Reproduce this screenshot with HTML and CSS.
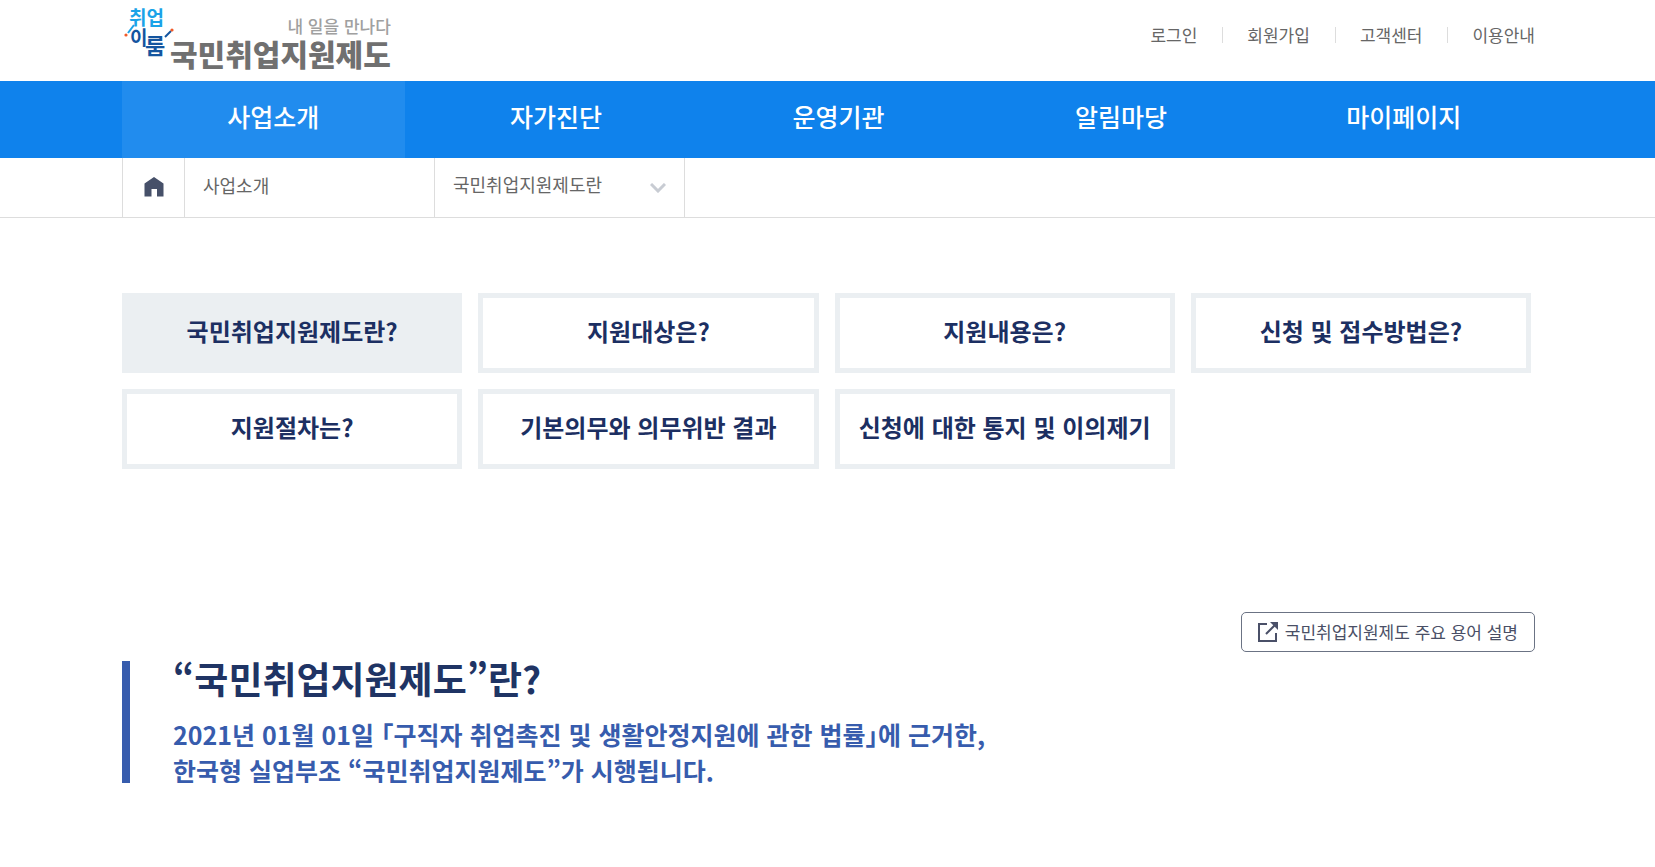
FILE: index.html
```html
<!DOCTYPE html>
<html lang="ko">
<head>
  <meta charset="UTF-8">
  <meta name="viewport" content="width=device-width, initial-scale=1.0">
  <title>국민취업지원제도</title>
  <link rel="stylesheet" href="styles.css">
</head>
<body>
  <!-- Header -->
  <header class="header">
    <a class="logo" href="#">
      <svg class="logo-mark" viewBox="0 0 52 60" aria-hidden="true">
        <text class="mark-top" x="7" y="25">취업</text>
        <text class="mark-bottom" x="8" y="45">이</text>
        <text class="mark-bottom mark-large" x="23" y="54">룸</text>
        <path d="M6 33l6-8" stroke="#1ba3e8" stroke-width="2"/>
        <path d="M43 37l6-6" stroke="#14559f" stroke-width="2"/>
        <circle cx="4" cy="35" r="1.6" fill="#f15a29"/>
        <circle cx="50" cy="30" r="1.6" fill="#f15a29"/>
      </svg>
      <span class="logo-text">
        <span class="logo-slogan">내 일을 만나다</span>
        <strong class="logo-name">국민취업지원제도</strong>
      </span>
    </a>
    <ul class="util">
      <li><a href="#">로그인</a></li>
      <li><a href="#">회원가입</a></li>
      <li><a href="#">고객센터</a></li>
      <li><a href="#">이용안내</a></li>
    </ul>
  </header>

  <!-- Main menu -->
  <nav class="gnb">
    <a class="active" href="#">사업소개</a>
    <a href="#">자가진단</a>
    <a href="#">운영기관</a>
    <a href="#">알림마당</a>
    <a href="#">마이페이지</a>
  </nav>

  <!-- Location -->
  <div class="location">
    <a class="home" href="#" aria-label="홈">
      <svg width="20" height="20" viewBox="0 0 20 20">
        <path d="M10 0l9.500 6.500V19.500H13V12H7.500V19.500H.5V6.500z" fill="#465069"/>
      </svg>
    </a>
    <a class="depth" href="#">사업소개</a>
    <div class="depth-select">
      <select aria-label="하위 메뉴">
        <option>국민취업지원제도란</option>
      </select>
      <svg width="16" height="10" viewBox="0 0 16 10" aria-hidden="true">
        <path d="M1 1l7 7 7-7" fill="none" stroke="#c8ccd3" stroke-width="3"/>
      </svg>
    </div>
  </div>

  <main class="content">
    <!-- Tabs -->
    <nav class="tabs">
      <a class="active" href="#">국민취업지원제도란?</a>
      <a href="#">지원대상은?</a>
      <a href="#">지원내용은?</a>
      <a href="#">신청 및 접수방법은?</a>
      <a href="#">지원절차는?</a>
      <a href="#">기본의무와 의무위반 결과</a>
      <a href="#">신청에 대한 통지 및 이의제기</a>
    </nav>

    <div class="tools">
      <button class="btn-terms" type="button">
        <svg width="20" height="20" viewBox="0 0 20 20" aria-hidden="true">
          <path d="M9 2H1v17h17v-8M8 12L18 2" fill="none" stroke="#4a5068" stroke-width="2"/>
          <path d="M12 0h8v8z" fill="#4a5068"/>
        </svg>
        <span>국민취업지원제도 주요 용어 설명</span>
      </button>
    </div>

    <!-- Intro -->
    <section class="intro">
      <h1>“국민취업지원제도”란?</h1>
      <p>2021년 01월 01일 「구직자 취업촉진 및 생활안정지원에 관한 법률」에 근거한,<br>한국형 실업부조 “국민취업지원제도”가 시행됩니다.</p>
    </section>
  </main>
</body>
</html>
```
FILE: styles.css
```css
/* Reset and base styles */
* {
  margin: 0;
  padding: 0;
  box-sizing: border-box;
}

body {
  font-family: "Noto Sans CJK KR", sans-serif;
  color: #666;
  background: #fff;
}

a {
  color: inherit;
  text-decoration: none;
}

ul {
  list-style: none;
}

svg {
  flex: none;
}

.header,
.gnb,
.location,
.content {
  padding: 0 120px 0 122px;
}

/* Header */
.header {
  display: flex;
  justify-content: space-between;
  height: 81px;
}

.logo {
  display: flex;
}

.logo-mark {
  width: 52px;
  height: 60px;
}

.mark-top,
.mark-bottom {
  font-size: 19px;
  font-weight: 700;
}

.mark-top {
  fill: #1ba3e8;
}

.mark-bottom {
  fill: #14559f;
}

.mark-large {
  font-size: 22px;
}

.logo-text {
  display: flex;
  flex-direction: column;
  align-items: flex-end;
  padding-top: 16px;
  margin-left: -4px;
}

.logo-slogan {
  font-size: 17px;
  font-weight: 500;
  line-height: 20px;
  color: #a0a0a0;
}

.logo-name {
  font-size: 30px;
  font-weight: 900;
  line-height: 35px;
  color: #707070;
}

.util {
  display: flex;
  align-items: center;
  height: 70px;
  font-size: 17px;
}

.util li {
  display: flex;
  align-items: center;
}

.util a {
  padding-bottom: 2px;
}

.util li + li::before {
  content: "";
  width: 1px;
  height: 16px;
  margin: 0 24px 0 25px;
  background: #ddd;
}

/* Main menu */
.gnb {
  display: grid;
  grid-template-columns: repeat(5, 1fr);
  background: #0f82ec;
}

.gnb a {
  padding: 0 0 7px 20px;
  font-size: 25px;
  font-weight: 500;
  line-height: 70px;
  text-align: center;
  color: #fff;
}

.gnb .active {
  background: #218cee;
}

/* Location */
.location {
  display: flex;
  height: 60px;
  border-bottom: 1px solid #ddd;
  font-size: 18px;
}

.home {
  display: flex;
  align-items: center;
  justify-content: center;
  width: 62px;
  padding-bottom: 2px;
  border-left: 1px solid #ddd;
}

.depth,
.depth-select {
  display: flex;
  align-items: center;
  width: 250px;
  padding: 0 18px;
  border-left: 1px solid #ddd;
}

.depth {
  padding-bottom: 6px;
}

.depth-select {
  position: relative;
  width: 251px;
  border-right: 1px solid #ddd;
}

.depth-select select {
  width: 100%;
  padding-bottom: 7px;
  border: 0;
  appearance: none;
  background: none;
  font: inherit;
  color: inherit;
}

.depth-select svg {
  position: absolute;
  right: 18px;
  pointer-events: none;
}

/* Tabs */
.tabs {
  display: grid;
  grid-template-columns: repeat(4, 1fr);
  gap: 16px;
  padding: 75px 4px 0 0;
}

.tabs a {
  padding: 0 4px 4px;
  border: 5px solid #ebeff2;
  font-size: 24px;
  font-weight: 700;
  line-height: 66px;
  text-align: center;
  white-space: nowrap;
  color: #1c2f62;
}

.tabs .active {
  background: #ebeff2;
}

/* Terms button */
.tools {
  display: flex;
  justify-content: flex-end;
  padding: 143px 0 9px;
}

.btn-terms {
  display: flex;
  align-items: center;
  gap: 7px;
  height: 40px;
  padding: 0 16px;
  border: 1px solid #6b7384;
  border-radius: 5px;
  background: #fff;
  font-family: inherit;
  font-size: 17px;
  color: #4a4f66;
}

.btn-terms span {
  padding-bottom: 2px;
}

/* Intro */
.intro {
  padding-left: 43px;
  border-left: 8px solid #375cad;
}

.intro h1 {
  font-size: 37px;
  font-weight: 700;
  line-height: 34px;
  color: #1f3464;
}

.intro p {
  margin-bottom: -5px;
  padding-top: 21px;
  font-size: 25px;
  font-weight: 700;
  font-feature-settings: "halt";
  line-height: 36px;
  color: #375cad;
}
```
